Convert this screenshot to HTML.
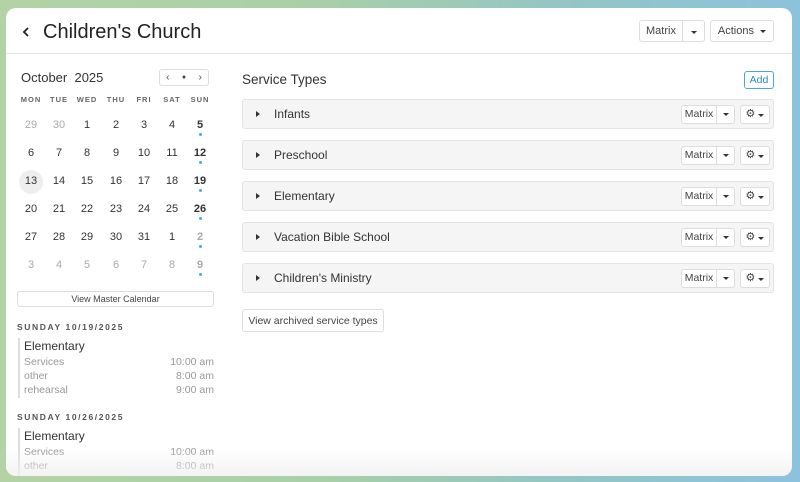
<!DOCTYPE html>
<html><head><style>
*{box-sizing:border-box;margin:0;padding:0}
body{width:800px;height:482px;overflow:hidden;font-family:"Liberation Sans",sans-serif;background:linear-gradient(90deg,#b3d3a6 0%,#a9cfa8 40%,#93c6c4 70%,#8cc2dd 100%);position:relative;color:#333}
.win{position:absolute;left:6px;top:8px;width:786px;height:468px;background:#fff;border-radius:10px;overflow:hidden}
.a{position:absolute}
.hdr{left:0;top:0;width:786px;height:46px;border-bottom:1px solid #e3e3e3}
.btn{position:absolute;border:1px solid #ddd;border-radius:3px;background:#fff;font-size:11px;color:#444;display:flex;align-items:center;justify-content:center}
.caret{width:0;height:0;border-left:3px solid transparent;border-right:3px solid transparent;border-top:3px solid #333;display:inline-block}
.dn{position:absolute;width:28px;text-align:center;font-size:11px;color:#333}
.dh{position:absolute;width:28px;text-align:center;font-size:7.5px;font-weight:bold;color:#666;letter-spacing:1px}
.g{color:#aaa}
.b{font-weight:bold}
.dot{position:absolute;width:3px;height:3px;border-radius:50%;background:#4aa7e6}
.row{position:absolute;left:236px;width:532px;height:30px;border:1px solid #e3e3e3;border-radius:3px;background:#f5f5f5}
.row .t{position:absolute;left:31px;top:7px;font-size:12px;color:#333}
.row .tri{position:absolute;left:13px;top:11px;width:0;height:0;border-top:3px solid transparent;border-bottom:3px solid transparent;border-left:4px solid #333}
.sm{position:absolute;border:1px solid #ddd;border-radius:3px;background:#fff;height:19px;top:5px;font-size:10.5px;color:#444}
.sh{position:absolute;left:11px;font-size:8.5px;font-weight:bold;letter-spacing:1.6px;color:#555}
.ev{position:absolute;left:12px;width:196px;border-left:2px solid #ddd;padding-left:4px}
.ev .n{font-size:12px;color:#333;height:18px;padding-top:1px}
.ev .l{font-size:10.5px;color:#999;height:14px;display:flex;justify-content:space-between}
</style></head><body>
<div class="win">
<div class="a hdr"></div>
<svg class="a" style="left:16px;top:19px" width="8" height="10"><path d="M6 1 L2 5 L6 9" stroke="#222" stroke-width="1.8" fill="none"/></svg>
<div class="a" style="left:37px;top:13px;font-size:20px;color:#222">Children's Church</div>
<div class="btn" style="left:633px;top:12px;width:66px;height:22px;justify-content:flex-start"><span style="width:43px;text-align:center;border-right:1px solid #ddd;line-height:20px">Matrix</span><span style="flex:1;text-align:center"><span class="caret"></span></span></div>
<div class="btn" style="left:704px;top:12px;width:64px;height:22px">Actions&nbsp;&nbsp;<span class="caret"></span></div>

<div class="a" style="left:15px;top:62px;font-size:13px;color:#333">October&nbsp; 2025</div>
<div class="btn" style="left:153px;top:61px;width:50px;height:17px;justify-content:space-around;font-size:10px"><span>‹</span><span style="font-size:7px">●</span><span>›</span></div>
<div id="cal"></div>

<div class="btn" style="left:11px;top:283px;width:197px;height:16px;font-size:9px">View Master Calendar</div>
<div class="sh" style="top:314px">SUNDAY 10/19/2025</div>
<div class="ev" style="top:330px"><div class="n">Elementary</div><div class="l"><span>Services</span><span>10:00 am</span></div><div class="l"><span>other</span><span>8:00 am</span></div><div class="l"><span>rehearsal</span><span>9:00 am</span></div></div>
<div class="sh" style="top:404px">SUNDAY 10/26/2025</div>
<div class="ev" style="top:420px;height:60px"><div class="n">Elementary</div><div class="l"><span>Services</span><span>10:00 am</span></div><div class="l"><span>other</span><span>8:00 am</span></div></div>

<div class="a" style="left:236px;top:64px;font-size:13.5px;color:#333">Service Types</div>
<div class="btn" style="left:738px;top:63px;width:30px;height:18px;border-color:#4aa7e6;color:#2a8ad4;font-size:10.5px">Add</div>
<div id="rows"></div>
<div class="btn" style="left:236px;top:301px;width:142px;height:23px;font-size:10.5px">View archived service types</div>
<div class="a" style="left:0;top:440px;width:786px;height:28px;background:linear-gradient(rgba(255,255,255,0),rgba(240,240,240,0.8))"></div>
</div>
<script>
var cal=document.getElementById('cal'),h='';
var xs=[25,53,81,110,138,166,194];
['MON','TUE','WED','THU','FRI','SAT','SUN'].forEach(function(d,i){h+='<div class="dh" style="left:'+(xs[i]-14)+'px;top:87px">'+d+'</div>'});
var days=[29,30,1,2,3,4,5,6,7,8,9,10,11,12,13,14,15,16,17,18,19,20,21,22,23,24,25,26,27,28,29,30,31,1,2,3,4,5,6,7,8,9];
days.forEach(function(d,k){var r=Math.floor(k/7),c=k%7,y=111+r*28;var cls='dn';
if(k<2||k>33)cls+=' g';if(c==6)cls+=' b';
if(k==14)h+='<div class="a" style="left:'+(xs[c]-12)+'px;top:'+(y-5)+'px;width:24px;height:24px;border-radius:50%;background:#eee"></div>';
h+='<div class="'+cls+'" style="left:'+(xs[c]-14)+'px;top:'+y+'px">'+d+'</div>';
if(c==6)h+='<div class="dot" style="left:'+(xs[c]-1)+'px;top:'+(y+14)+'px"></div>';});
cal.innerHTML=h;
var rs=['Infants','Preschool','Elementary','Vacation Bible School',"Children's Ministry"],o='';
rs.forEach(function(n,i){o+='<div class="row" style="top:'+(91+i*41)+'px"><div class="tri"></div><div class="t">'+n+'</div>'+
'<div class="sm" style="left:438px;width:54px;display:flex"><span style="width:35px;text-align:center;border-right:1px solid #ddd;line-height:17px">Matrix</span><span style="flex:1;text-align:center;line-height:14px"><span class="caret"></span></span></div>'+
'<div class="sm" style="left:497px;width:30px;text-align:center;line-height:16px;font-size:11px">⚙ <span class="caret"></span></div></div>'});
document.getElementById('rows').innerHTML=o;
</script>
</body></html>
